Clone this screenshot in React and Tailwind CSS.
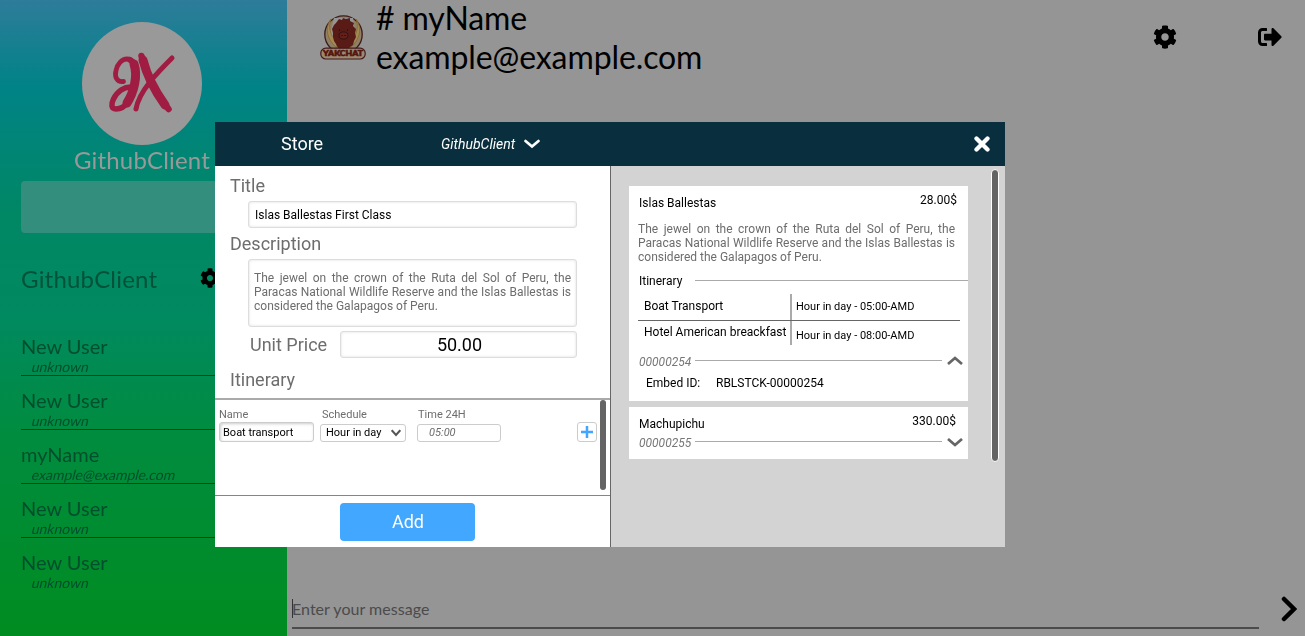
import React from "react";
import { FaCog, FaSignOutAlt } from "react-icons/fa";

const users = [
  { name: "New User", mail: "unknown" },
  { name: "New User", mail: "unknown" },
  { name: "myName", mail: "example@example.com" },
  { name: "New User", mail: "unknown" },
  { name: "New User", mail: "unknown" },
];

const blurb =
  "The jewel on the crown of the Ruta del Sol of Peru, the Paracas National Wildlife Reserve and the Islas Ballestas is considered the Galapagos of Peru.";

function Chevron({ className, width = 3, flip = false }) {
  return (
    <svg viewBox="0 0 16 9" className={className} fill="none" stroke="currentColor" strokeWidth={width}>
      <path d={flip ? "M1 8 8 2l7 6" : "M1 1l7 6 7-6"} />
    </svg>
  );
}

function Avatar() {
  return (
    <svg viewBox="0 0 120 123" className="h-[123px] w-[120px]" fill="none" stroke="#a01c42" strokeLinecap="round" strokeLinejoin="round">
      <ellipse cx="60" cy="61.5" rx="60" ry="61.5" fill="#999999" stroke="none" />
      <path d="M41.500 59.500c-7 1-9-5-7.500-11 1.500-7 6-11.500 11-11.500 7 0 9 6 8 18" strokeWidth="4.800" />
      <path d="M48 38c7 4 6 14 4 25-2 13-8 24-18 24-5 0-5-5-2.500-10 4-8 11-12.500 18.500-12" strokeWidth="5.500" />
      <path d="M52 42c4 12 0 28-7 39" strokeWidth="9" />
      <path d="M59.500 34c5 20 15 39 27 53" strokeWidth="6.500" />
      <path d="M61 38c4 16 12 31 22 45" strokeWidth="9" />
      <path d="M90 36C76 50 57 69 54 87" strokeWidth="5" />
    </svg>
  );
}

function YakLogo() {
  return (
    <svg viewBox="0 0 46 45" className="h-[45px] w-[46px]">
      <circle cx="23.500" cy="19.500" r="18.700" fill="#8f7f66" stroke="#3b1b1a" strokeWidth="1.300" />
      <path d="M14 3h19l3 18-6 12H16L10 20z" fill="#959595" />
      <path d="M11 4C5 12 6 24 17 33l-1-8C10 20 8 12 11 4ZM36 4c6 8 5 20-6 29l1-8c6-5 8-13 5-21Z" fill="#a38a55" stroke="#876729" strokeWidth=".8" />
      <path d="m23 3 3 1 4-1 0 3 4 2-1 3 3 3-1 4 1 4-2 4-1 4-3 2-2 3-4 2-4-2-2-2-2-4-2-3-1-4 0-4-1-4 2-4 2-2 3-4 3 1z" fill="#581b15" />
      <ellipse cx="23.500" cy="20.500" rx="4.500" ry="3.600" fill="#631f18" stroke="#351112" strokeWidth="1" />
      <path d="M22 20v1m3-1v1M19 15h.8m7.200 0h.8" stroke="#240b0c" strokeWidth="1.300" />
      <rect x=".8" y="33.200" width="44.400" height="10.800" rx="5" fill="#9b8972" stroke="#421b1a" strokeWidth="1.200" />
      <text x="23" y="41" textAnchor="middle" textLength="40" lengthAdjust="spacingAndGlyphs" fill="#54150f" stroke="#54150f" strokeWidth=".6" className="font-['Lato'] text-[7px] font-black">YAKCHAT</text>
    </svg>
  );
}

function Sidebar() {
  return (
    <aside className="h-full w-[287px] shrink-0 overflow-hidden bg-[linear-gradient(180deg,#2e7c9a_0px,#008387_86px,#008765_210px,#008a60_318px,#008c40_430px,#008c20_636px)] px-[21px] pt-[22px] will-change-transform">
      <div className="flex flex-col items-center">
        <div className="w-[245px] pl-[61px]">
          <Avatar />
        </div>
        <p className="h-[36px] w-[245px] pl-[53px] text-[24px] leading-[29px] tracking-[0.17px] text-[#999]">GithubClient</p>
      </div>
      <div className="h-[52px] rounded-[4px] bg-[#338e7d]" />
      <div className="mt-[31px] flex h-[31px] items-start justify-between">
        <h2 className="text-[24px] leading-[29px] tracking-[0.2px] text-[#00523a]">GithubClient</h2>
        <FaCog className="mr-[46px] mt-[4px] size-[20px] text-black" />
      </div>
      <ul className="mt-[27px]">
        {users.map((user, i) => (
          <li key={i} className="h-[54px] border-b border-[#00451c] pt-[12px] text-[#004f2c] last:border-b-0">
            <p className="text-[20px] leading-[24px]">{user.name}</p>
            <p className="ml-[10px] w-fit origin-[0_75%] -skew-x-[14deg] text-[14px] leading-[17px]">{user.mail}</p>
          </li>
        ))}
      </ul>
    </aside>
  );
}

function Chat() {
  return (
    <main className="flex h-full grow flex-col justify-between bg-[#959595]">
      <header className="flex text-black">
        <div className="ml-[33px] pt-[15px]">
          <YakLogo />
        </div>
        <h1 className="ml-[10px] text-[32px] tracking-[-0.1px]">
          <span className="block leading-[36px]"># myName</span>
          <span className="block leading-[42px]">example@example.com</span>
        </h1>
        <div className="ml-auto flex items-start pt-[25px]">
          <FaCog className="mr-[81px] size-[24px]" />
          <FaSignOutAlt className="mr-[23px] size-[24px]" />
        </div>
      </header>
      <footer className="flex h-[46px] items-start">
        <div className="ml-[5px] h-[39px] w-[967px] border-b-2 border-[#4b4b4b]">
          <div className="mt-[9px] flex h-[19px] items-center border-l border-[#333] text-[16px] text-[#4b4b4b]"><span className="-ml-px tracking-[0.03px]">Enter your message</span></div>
        </div>
        <svg viewBox="0 0 16 26" className="ml-[22px] mt-[6px] h-[26px] w-[16px]" fill="none" stroke="black" strokeWidth="4.500" strokeLinecap="round">
          <path d="m3 3 10 10L3 23" />
        </svg>
      </footer>
    </main>
  );
}

function ProductForm() {
  return (
    <section className="flex w-[395px] shrink-0 flex-col bg-white text-[#6d6d6d]">
      <h3 className="h-[35px] pl-[15px] pt-[8px] text-[18px] leading-[24px]">Title</h3>
      <div className="ml-[33px] flex h-[27px] w-[329px] items-center rounded-[3px] border border-[#ddd] px-[6px] text-[12px] text-black shadow-[inset_0_0_3px_#ddd]">Islas Ballestas First Class</div>
      <h3 className="h-[31px] pl-[15px] pt-[4px] text-[18px] leading-[24px]">Description</h3>
      <div className="ml-[33px] h-[68px] w-[329px] rounded-[3px] border border-[#ddd] px-[5px] pt-[11px] text-justify text-[12px] leading-[14px] shadow-[inset_0_0_3px_#ddd]">{blurb}</div>
      <div className="mt-[4px] flex h-[27px] items-center">
        <h3 className="w-[125px] pl-[35px] text-[18px]">Unit Price</h3>
        <div className="flex h-[27px] w-[237px] items-center justify-center rounded-[3px] border border-[#ddd] pl-[2px] text-[18px] text-black shadow-[inset_0_0_3px_#ddd]">50.00</div>
      </div>
      <h3 className="h-[40px] pl-[15px] pt-[10px] text-[18px] leading-[24px]">Itinerary</h3>
      <div className="flex h-[98px] border-b border-t-2 border-b-[#858585] border-t-[#aaa]">
        <div className="w-[99px] pl-[4px] pt-[8px] text-[11px] leading-[14px]">
          <p>Name</p>
          <p className="flex h-[20px] w-[95px] items-center rounded-[3px] border border-[#ccc] pl-[3px] pt-px text-black shadow-[inset_1px_1px_3px_#ccc]">Boat transport</p>
        </div>
        <div className="w-[97px] pl-[6px] pt-[8px] text-[11px] leading-[14px]">
          <p className="pl-[2px]">Schedule</p>
          <p className="mt-[2px] flex h-[18px] w-[86px] items-center justify-between rounded-[3px] border border-[#ccc] pl-[5px] pr-[4px] text-black">
            Hour in day
            <svg viewBox="0 0 10 8" className="h-[8px] w-[10px] text-[#555]" fill="none" stroke="currentColor" strokeWidth="2"><path d="m.7 1.200 4.300 4.800 4.300-4.800" /></svg>
          </p>
        </div>
        <div className="w-[166px] pl-[6px] pt-[8px] text-[11px] leading-[14px]">
          <p className="pl-px">Time 24H</p>
          <p className="mt-[2px] flex h-[18px] w-[84px] items-center rounded-[3px] border border-[#ccc] pl-[11px] italic">05:00</p>
        </div>
        <div className="mt-[22px] flex size-[20px] items-center justify-center rounded-[3px] border border-[#ccc]">
          <svg viewBox="0 0 12 12" className="size-[12px]" stroke="#42a5ff" strokeWidth="2.500"><path d="M6 0v12M0 6h12" /></svg>
        </div>
        <div className="ml-[3px] h-[90px] w-[6px] rounded-full bg-[#646464]" />
      </div>
      <div className="flex pt-[7px]">
        <button className="ml-[125px] h-[38px] w-[135px] rounded-[4px] bg-[#42a7ff] pb-px pl-px text-[18px] text-white">Add</button>
      </div>
    </section>
  );
}

function Catalogue() {
  return (
    <section className="flex w-[395px] shrink-0 border-l border-[#666] bg-[#d3d3d3] text-[12px] text-black">
      <div className="ml-[18px] w-[339px] pt-[20px]">
        <article className="h-[215px] bg-white">
          <div className="flex h-[36px] justify-between pl-[10px] pr-[11px] leading-[14px]">
            <h4 className="pt-[10px]">Islas Ballestas</h4>
            <span className="pt-[7px]">28.00$</span>
          </div>
          <p className="pl-[9px] pr-[13px] text-justify leading-[14px] text-[#6d6d6d]">{blurb}</p>
          <div className="mt-[10px] flex h-[14px] items-center pl-[10px]">
            <h5 className="w-[56px]">Itinerary</h5>
            <div className="mb-px h-px grow bg-[#aaa]" />
          </div>
          <div className="ml-[9px] mt-[6px] grid h-[51px] w-[322px] grid-cols-[152px_2px_168px] grid-rows-[26px_1px_24px]">
            <span className="pl-[6px] leading-[24px]">Boat Transport</span>
            <i className="bg-[#aaa]" />
            <span className="pl-[4px] text-[11px] leading-[26px]">Hour in day - 05:00-AMD</span>
            <i className="col-span-3 bg-[#666]" />
            <span className="whitespace-nowrap pl-[6px] leading-[22px]">Hotel American breackfast</span>
            <i className="bg-[#aaa]" />
            <span className="pl-[4px] text-[11px] leading-[30px]">Hour in day - 08:00-AMD</span>
          </div>
          <div className="mt-[7px] flex h-[18px] items-center pl-[10px]">
            <span className="w-[56px] pt-px italic text-[#777]">00000254</span>
            <div className="mb-[2px] h-px w-[247px] bg-[#aaa]" />
            <Chevron className="mb-px ml-[5px] h-[9px] w-[16px] text-[#666]" flip width={2.7} />
          </div>
          <div className="flex pl-[17px] pt-[6px] leading-[14px]">
            <span className="w-[70px]">Embed ID:</span>
            <span>RBLSTCK-00000254</span>
          </div>
        </article>
        <article className="mt-[6px] h-[52px] bg-white">
          <div className="flex h-[26px] justify-between pl-[10px] pr-[12px] leading-[14px]">
            <h4 className="pt-[10px]">Machupichu</h4>
            <span className="pt-[7px]">330.00$</span>
          </div>
          <div className="flex h-[18px] items-center pl-[10px]">
            <span className="w-[56px] pt-px italic text-[#777]">00000255</span>
            <div className="mb-px h-px w-[247px] bg-[#aaa]" />
            <Chevron className="ml-[5px] mt-px h-[9px] w-[16px] text-[#666]" width={2.7} />
          </div>
        </article>
      </div>
      <div className="ml-[23px] mt-[3px] h-[293px] w-[8px] rounded-full border border-white bg-[#646464]" />
    </section>
  );
}

function StoreDialog() {
  return (
    <div role="dialog" className="absolute left-[215px] top-[122px] flex h-[425px] w-[790px] flex-col font-['Roboto',sans-serif] will-change-transform">
      <header className="flex h-[44px] shrink-0 items-center bg-[#092e3e] text-white">
        <h2 className="w-[226px] pb-px pl-[66px] text-[18px]">Store</h2>
        <span className="text-[14px] italic">GithubClient</span>
        <svg viewBox="0 0 16 10" className="ml-[9px] h-[10px] w-[16px]" fill="none" stroke="white" strokeWidth="2.700" strokeLinecap="round"><path d="m1.500 2 6.500 5.500L14.500 2" /></svg>
        <svg viewBox="0 0 16 16" className="ml-auto mr-[15px] size-[16px]" stroke="white" strokeWidth="4.300" strokeLinecap="round"><path d="m2.500 2.500 11 11m0-11-11 11" /></svg>
      </header>
      <div className="flex grow">
        <ProductForm />
        <Catalogue />
      </div>
    </div>
  );
}

export default function App() {
  return (
    <div className="relative flex h-[636px] w-[1305px] overflow-hidden font-['Lato',sans-serif]">
      <Sidebar />
      <Chat />
      <StoreDialog />
    </div>
  );
}
